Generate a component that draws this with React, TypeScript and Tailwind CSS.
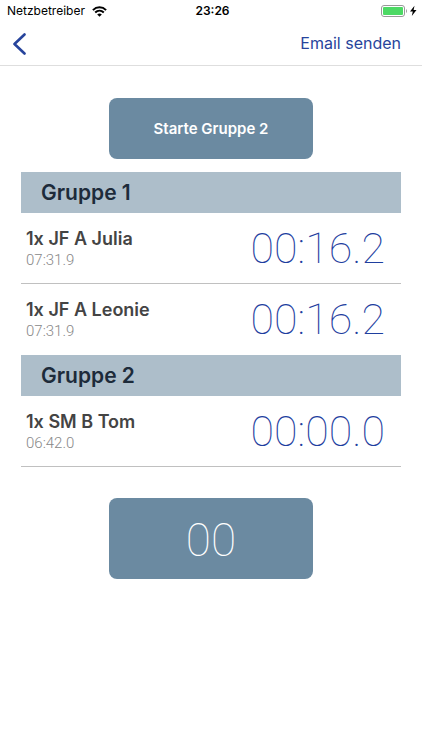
import React from "react";

type Runner = { name: string; best: string; time: string };
type Group = { title: string; runners: Runner[] };

const groups: Group[] = [
  {
    title: "Gruppe 1",
    runners: [
      { name: "1x JF A Julia", best: "07:31.9", time: "00:16.2" },
      { name: "1x JF A Leonie", best: "07:31.9", time: "00:16.2" },
    ],
  },
  {
    title: "Gruppe 2",
    runners: [{ name: "1x SM B Tom", best: "06:42.0", time: "00:00.0" }],
  },
];

function WifiIcon() {
  return (
    <svg width="15" height="11" viewBox="0 0 15 11" fill="none" stroke="#000" strokeWidth="2" aria-hidden="true">
      <path d="M0.9 4.1C4.7 0.4 10.3 0.4 14.1 4.1" />
      <path d="M3.2 6.5C5.7 4.1 9.3 4.1 11.8 6.5" />
      <path d="M7.5 10.8L5.2 8.5C6.5 7.3 8.5 7.3 9.8 8.5Z" fill="#000" stroke="none" />
    </svg>
  );
}

function BatteryIcon() {
  return (
    <svg width="37" height="12" viewBox="0 0 37 12" aria-hidden="true">
      <rect x="0.5" y="0.5" width="23" height="11" rx="2.5" fill="#fff" stroke="#999" />
      <rect x="2" y="2" width="20" height="8" rx="1" fill="#4cd964" />
      <path d="M25 4v4c1.3-.5 1.3-3.5 0-4z" fill="#999" />
      <path d="M33.5 0.8L29 6.5h2.8l-1 4.5 4.7-5.9h-2.9z" fill="#000" />
    </svg>
  );
}

function StatusBar() {
  return (
    <div className="grid h-[22px] grid-cols-3 items-center pl-[7px] pr-1 text-[12px] text-black">
      <div className="flex items-center gap-[7px] whitespace-nowrap">
        <span>Netzbetreiber</span>
        <WifiIcon />
      </div>
      <span className="text-center font-semibold">23:26</span>
      <div className="flex justify-end">
        <BatteryIcon />
      </div>
    </div>
  );
}

function RunnerRow({ runner, last }: { runner: Runner; last: boolean }) {
  return (
    <li
      className={`flex h-[71px] items-center justify-between border-b pl-[5px] pr-4 ${
        last ? "border-transparent" : "border-[#c0c0c0]"
      }`}
    >
      <div>
        <p className="text-[18px] leading-6 font-semibold text-[#444]">{runner.name}</p>
        <p className="font-[Roboto,sans-serif] text-[15px] leading-[18px] font-light text-[#888]">{runner.best}</p>
      </div>
      <span className="font-[Roboto,sans-serif] text-[43px] leading-[48px] font-thin text-[#1f3f9f]">
        {runner.time}
      </span>
    </li>
  );
}

export default function App() {
  return (
    <div className="min-h-screen bg-white font-[Inter,sans-serif]">
      <StatusBar />
      <header className="flex h-11 items-center justify-between border-b border-[#dedede] pl-3 pr-[21px] text-[#27449c]">
        <button type="button" aria-label="Zurück" className="flex h-11 items-center">
          <svg width="15" height="22" viewBox="0 0 15 22" fill="none" stroke="currentColor" strokeWidth="2.6" strokeLinecap="round" strokeLinejoin="round">
            <path d="M12.5 1.5L2.5 11l10 9.5" />
          </svg>
        </button>
        <button type="button" className="pb-0.5 text-[16px]">
          Email senden
        </button>
      </header>

      <main className="flex flex-col px-[21px] pt-8">
        <button
          type="button"
          className="h-[61px] w-[204px] self-center rounded-lg bg-[#6b8aa1] pt-0.5 text-[15px] font-semibold text-white"
        >
          Starte Gruppe 2
        </button>

        <div className="mt-[13px]">
          {groups.map((group, g) => (
            <section key={group.title}>
              <h2 className="flex h-[41px] items-center bg-[#adbeca] pl-5 text-[21px] font-semibold text-[#1d2b3a]">
                {group.title}
              </h2>
              <ul>
                {group.runners.map((runner, i) => (
                  <RunnerRow
                    key={runner.name}
                    runner={runner}
                    last={i === group.runners.length - 1 && g < groups.length - 1}
                  />
                ))}
              </ul>
            </section>
          ))}
        </div>

        <button
          type="button"
          className="mt-[31px] h-[81px] w-[204px] self-center rounded-lg bg-[#6b8aa1] pt-1 font-[Roboto,sans-serif] text-[46px] font-thin text-white"
        >
          00
        </button>
      </main>
    </div>
  );
}
